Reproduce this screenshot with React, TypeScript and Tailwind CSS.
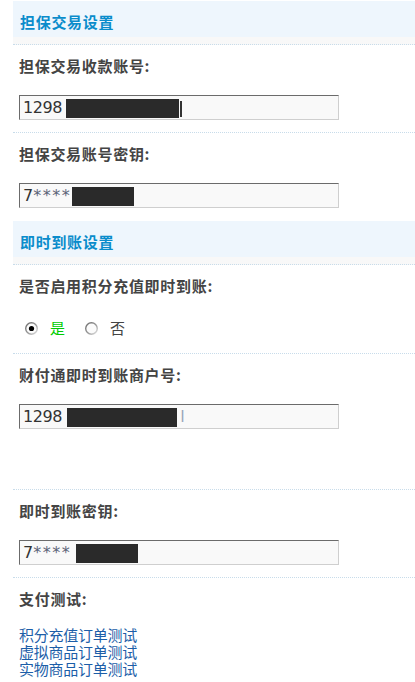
import React from "react";

const cjk = { fontFamily: '"Noto Sans CJK SC", "Noto Sans", sans-serif' };
const mono = { fontFamily: '"DejaVu Sans", "Noto Sans", sans-serif' };

function Header({ title }: { title: string }) {
  return (
    <div>
      <div
        className="mt-[1px] h-[36px] bg-[#eef6fd] pl-[7px] pt-[11px] text-[15px] font-bold leading-[20px] tracking-[0.7px] text-[#0a8ccb]"
        style={cjk}
      >
        {title}
      </div>
      <div className="h-[8px] border-b border-dotted border-[#c8dcea] bg-[#f8f8f8]" />
    </div>
  );
}

function Label({ text }: { text: string }) {
  return (
    <div
      className="h-[20px] text-[15px] font-bold leading-[20px] tracking-[0.7px] text-[#444]"
      style={cjk}
    >
      {text}
    </div>
  );
}

function Field({ children }: { children: React.ReactNode }) {
  return (
    <div
      className="mt-[19px] flex h-[25px] w-[320px] items-center border border-t-[#6b6b6b] border-l-[#6b6b6b] border-r-[#cfcfcf] border-b-[#cfcfcf] bg-[#f9f9f9] pl-[3px] text-[16px] text-[#333]"
      style={mono}
    >
      {children}
    </div>
  );
}

function Redact({ w, ml }: { w: string; ml: string }) {
  return <span className={`${w} ${ml} mt-[2px] inline-block h-[19px] bg-[#2a2a2a]`} />;
}

function Radio({ checked }: { checked: boolean }) {
  return (
    <svg width="13" height="13" viewBox="0 0 13 13" className="shrink-0">
      <defs>
        <linearGradient id={checked ? "rg1" : "rg2"} x1="0" y1="0" x2="1" y2="1">
          <stop offset="0" stopColor="#6a6a6a" />
          <stop offset="0.55" stopColor="#9a9a9a" />
          <stop offset="1" stopColor="#e6e6e6" />
        </linearGradient>
      </defs>
      <circle cx="6.5" cy="6.5" r="5.8" fill="#fbfbfb" stroke={`url(#${checked ? "rg1" : "rg2"})`} strokeWidth="1.4" />
      {checked && <circle cx="6.5" cy="6.5" r="2.6" fill="#000" />}
    </svg>
  );
}

export default function App() {
  return (
    <div className="min-h-[682px] w-[415px] bg-white">
      <div className="ml-[13px]">
        <Header title="担保交易设置" />
        <div className="border-b border-dotted border-[#c8dcea] pb-[12px] pl-[6px] pt-[11px]">
          <Label text="担保交易收款账号:" />
          <Field>
            <span className="tracking-[-0.4px]">1298</span>
            <Redact w="w-[113px]" ml="ml-[4px]" />
            <span className="ml-[1px] mt-[2px] inline-block h-[16px] w-[2px] bg-[#333]" />
          </Field>
        </div>
        <div className="pb-[12px] pl-[6px] pt-[11px]">
          <Label text="担保交易账号密钥:" />
          <Field>
            <span>7</span>
            <span className="tracking-[1.5px] text-[#5c6478]">****</span>
            <Redact w="w-[62px]" ml="ml-[1px]" />
          </Field>
        </div>

        <Header title="即时到账设置" />
        <div className="border-b border-dotted border-[#c8dcea] pb-[12px] pl-[6px] pt-[11px]">
          <Label text="是否启用积分充值即时到账:" />
          <div className="mt-[19px] flex h-[26px] items-center text-[15px]" style={cjk}>
            <span className="ml-[6px]">
              <Radio checked />
            </span>
            <span className="ml-[12px] text-[#00cc00]">是</span>
            <span className="ml-[20px]">
              <Radio checked={false} />
            </span>
            <span className="ml-[12px] text-[#444]">否</span>
          </div>
        </div>
        <div className="border-b border-dotted border-[#c8dcea] pb-[60px] pl-[6px] pt-[11px]">
          <Label text="财付通即时到账商户号:" />
          <Field>
            <span className="tracking-[-0.4px]">1298</span>
            <Redact w="w-[110px]" ml="ml-[5px]" />
            <span className="ml-[3px] text-[#9aa6bb]">l</span>
          </Field>
        </div>
        <div className="border-b border-dotted border-[#c8dcea] pb-[12px] pl-[6px] pt-[11px]">
          <Label text="即时到账密钥:" />
          <Field>
            <span>7</span>
            <span className="tracking-[1.5px] text-[#5c6478]">****</span>
            <Redact w="w-[62px]" ml="ml-[5px]" />
          </Field>
        </div>
        <div className="pl-[6px] pt-[11px]">
          <Label text="支付测试:" />
          <div
            className="mt-[17px] flex flex-col text-[15px] leading-[17px] tracking-[-0.25px] text-[#1c5ea8]"
            style={cjk}
          >
            <a href="#">积分充值订单测试</a>
            <a href="#">虚拟商品订单测试</a>
            <a href="#">实物商品订单测试</a>
          </div>
        </div>
      </div>
    </div>
  );
}
